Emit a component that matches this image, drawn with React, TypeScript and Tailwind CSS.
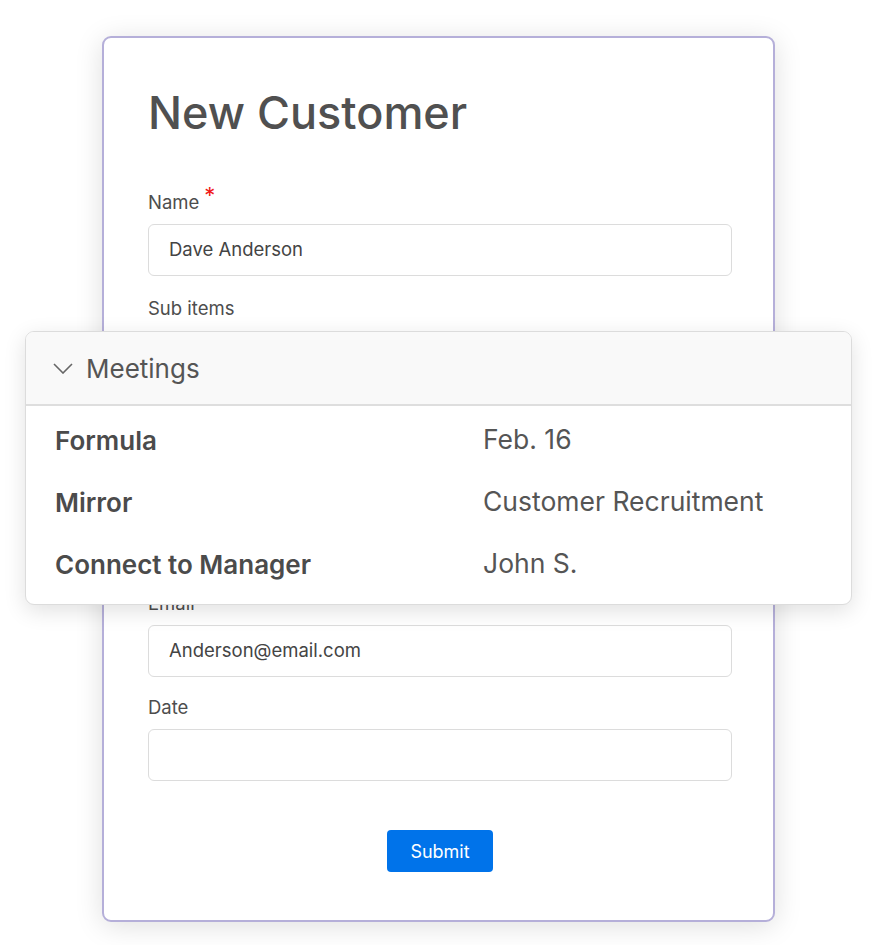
export default function App() {
    const rows = [
        { label: "Formula", value: "Feb. 16" },
        { label: "Mirror", value: "Customer Recruitment" },
        { label: "Connect to Manager", value: "John S." },
    ];

    return (
        <div
            className="relative min-h-screen bg-white pt-[36px] pl-[102px] text-[#4d4d4d]"
            style={{ fontFamily: "Inter, 'Noto Sans', sans-serif" }}
        >
            {/* form card */}
            <div className="w-[673px] rounded-[9px] border-2 border-[#b5afd9] bg-white pl-[44px] pr-[41px] pt-[52px] pb-[48px] shadow-[0_4px_28px_rgba(0,0,0,0.13)]">
                <h1 className="text-[45px] font-medium leading-none text-[#505050]">New Customer</h1>

                <div className="mt-[55px] flex h-[24px] items-center text-[18.5px] leading-[24px]">
                    Name
                    <span className="ml-[5px] -mt-[14px] text-[22px] text-[#f01818]">*</span>
                </div>
                <div className="mt-[10px] flex h-[52px] items-center rounded-[6px] border-[1.5px] border-[#dcdcdc] pl-[20px] text-[18.5px] text-[#444]">
                    Dave Anderson
                </div>

                <div className="mt-[20px] text-[18.5px] leading-[24px]">Sub items</div>
                <div className="h-[271px]" />

                <div className="text-[18.5px] leading-[24px]">Email</div>
                <div className="mt-[10px] flex h-[52px] items-center rounded-[6px] border-[1.5px] border-[#dcdcdc] pl-[20px] text-[18.5px] text-[#444]">
                    Anderson@email.com
                </div>

                <div className="mt-[18px] text-[18.5px] leading-[24px]">Date</div>
                <div className="mt-[10px] h-[52px] rounded-[6px] border-[1.5px] border-[#dcdcdc]" />

                <div className="mt-[49px] flex justify-center">
                    <button className="h-[42px] w-[106px] rounded-[4px] bg-[#0073ea] text-[18px] text-white">
                        Submit
                    </button>
                </div>
            </div>

            {/* sub item popover */}
            <div className="absolute left-[25px] top-[331px] w-[827px] overflow-hidden rounded-[9px] border-[1.5px] border-[#dcdcdc] bg-white shadow-[0_6px_22px_rgba(0,0,0,0.12)]">
                <div className="flex h-[74px] items-center gap-[13px] border-b-2 border-[#dedede] bg-[#f9f9f9] pl-[27px]">
                    <svg width="20" height="11" viewBox="0 0 20 11" fill="none">
                        <polyline points="1,1 10,10 19,1" stroke="#666" strokeWidth="1.6" />
                    </svg>
                    <span className="text-[26px] text-[#555]">Meetings</span>
                </div>
                <div className="pt-[3px] pb-[9px] pl-[29px]">
                    {rows.map((r) => (
                        <div key={r.label} className="grid h-[62px] grid-cols-[428px_1fr] items-center text-[26px]">
                            <span className="font-semibold text-[#4b4b4b]">{r.label}</span>
                            <span className="text-[26.5px] text-[#555]">{r.value}</span>
                        </div>
                    ))}
                </div>
            </div>
        </div>
    );
}
